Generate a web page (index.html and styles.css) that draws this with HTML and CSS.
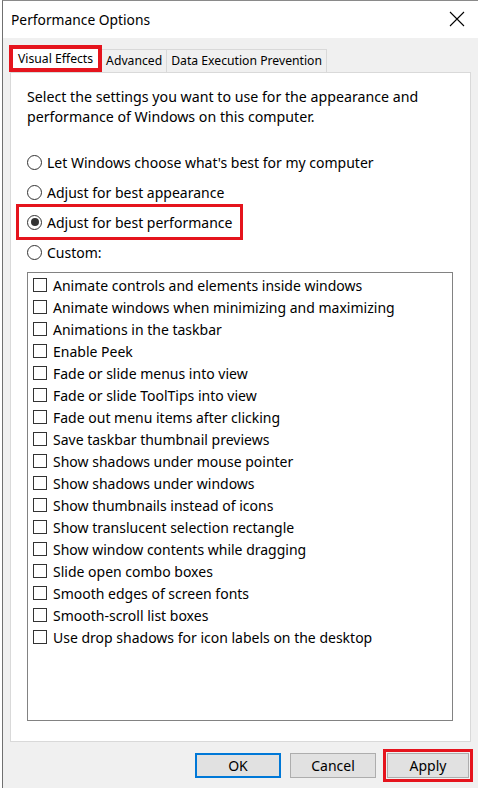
FILE: index.html
```html
<!DOCTYPE html>
<html>
<head>
<meta charset="utf-8">
<link rel="stylesheet" href="styles.css">
</head>
<body>
<div class="window">
  <div class="titlebar">
    <span class="title">Performance Options</span>
    <svg class="close" width="16" height="16" viewBox="0 0 16 16"><path d="M1 1L15 15M15 1L1 15" stroke="#000" stroke-width="1.1" fill="none"/></svg>
  </div>
  <div class="main">
    <div class="tabs">
      <div class="tab selected">Visual Effects</div>
      <div class="tab">Advanced</div>
      <div class="tab">Data Execution Prevention</div>
    </div>
    <div class="panel">
      <p class="desc">Select the settings you want to use for the appearance and performance of Windows on this computer.</p>
      <div class="radios">
        <div class="radio"><span class="circle"></span><span>Let Windows choose what's best for my computer</span></div>
        <div class="radio"><span class="circle"></span><span>Adjust for best appearance</span></div>
        <div class="radio highlight"><span class="circle checked"></span><span>Adjust for best performance</span></div>
        <div class="radio"><span class="circle"></span><span>Custom:</span></div>
      </div>
      <div class="listbox">
        <div class="item"><span class="box"></span><span>Animate controls and elements inside windows</span></div>
        <div class="item"><span class="box"></span><span>Animate windows when minimizing and maximizing</span></div>
        <div class="item"><span class="box"></span><span>Animations in the taskbar</span></div>
        <div class="item"><span class="box"></span><span>Enable Peek</span></div>
        <div class="item"><span class="box"></span><span>Fade or slide menus into view</span></div>
        <div class="item"><span class="box"></span><span>Fade or slide ToolTips into view</span></div>
        <div class="item"><span class="box"></span><span>Fade out menu items after clicking</span></div>
        <div class="item"><span class="box"></span><span>Save taskbar thumbnail previews</span></div>
        <div class="item"><span class="box"></span><span>Show shadows under mouse pointer</span></div>
        <div class="item"><span class="box"></span><span>Show shadows under windows</span></div>
        <div class="item"><span class="box"></span><span>Show thumbnails instead of icons</span></div>
        <div class="item"><span class="box"></span><span>Show translucent selection rectangle</span></div>
        <div class="item"><span class="box"></span><span>Show window contents while dragging</span></div>
        <div class="item"><span class="box"></span><span>Slide open combo boxes</span></div>
        <div class="item"><span class="box"></span><span>Smooth edges of screen fonts</span></div>
        <div class="item"><span class="box"></span><span>Smooth-scroll list boxes</span></div>
        <div class="item"><span class="box"></span><span>Use drop shadows for icon labels on the desktop</span></div>
      </div>
    </div>
    <div class="buttons">
      <button class="btn default">OK</button>
      <button class="btn">Cancel</button>
      <button class="btn apply">Apply</button>
    </div>
  </div>
</div>
</body>
</html>
```

FILE: styles.css
```css
* { box-sizing: border-box; }
html, body { margin: 0; padding: 0; }
body {
  background: #fff;
  font-family: "Noto Sans", "Open Sans", sans-serif;
  color: #000;
  width: 478px;
  height: 788px;
  overflow: hidden;
}
.window {
  margin-left: 2px;
  height: 788px;
  border-left: 1px solid #707070;
  border-top: 1px solid #8a8a8a;
  background: #f0f0f0;
  display: flex;
  flex-direction: column;
}
.titlebar {
  height: 37px;
  background: #fff;
  display: flex;
  align-items: center;
  justify-content: space-between;
  padding: 0 13px 0 8px;
}
.title {
  font-size: 13.8px;
}
.close { display: block; margin-bottom: 2px; }
.main {
  padding: 7px 7px 0 6px;
  flex: 1;
  display: flex;
  flex-direction: column;
}
.tabs {
  display: flex;
  align-items: flex-end;
  height: 27px;
  font-size: 12.2px;
  position: relative;
  z-index: 1;
}
.tab {
  height: 23px;
  line-height: 21px;
  padding: 0 4px;
  border: 1px solid #d9d9d9;
  border-bottom: none;
  border-left: none;
  background: #f0f0f0;
}
.tab.selected {
  height: 27px;
  line-height: 19px;
  background: #fff;
  border: 4px solid #e5141d;
  padding: 0 5px;
}
.panel {
  margin-left: 1px;
  background: #fff;
  border: 1px solid #d9d9d9;
  padding: 14px 14px 20px 16px;
  height: 670px;
}
.desc {
  margin: 0;
  font-size: 14.2px;
  line-height: 20px;
  padding-right: 10px;
}
.radios {
  margin-top: 20px;
  display: flex;
  flex-direction: column;
  align-items: flex-start;
}
.radio {
  height: 30px;
  display: flex;
  align-items: center;
  gap: 5px;
  font-size: 14px;
  padding: 0 8px;
  margin-left: -8px;
}
.radio.highlight {
  outline: 3px solid #e5141d;
  outline-offset: 0;
}
.circle {
  width: 15px;
  height: 15px;
  border: 1px solid #333;
  border-radius: 50%;
  background: #fff;
  display: flex;
  align-items: center;
  justify-content: center;
}
.circle.checked::after {
  content: "";
  width: 8px;
  height: 8px;
  border-radius: 50%;
  background: #333;
}
.listbox {
  margin-top: 5px;
  width: 426px;
  height: 449px;
  border: 1px solid #828282;
  padding: 1px 0 0 5px;
}
.item {
  height: 22px;
  display: flex;
  align-items: center;
  gap: 6px;
  font-size: 14px;
}
.box {
  width: 14px;
  height: 14px;
  border: 1px solid #333;
  background: #fff;
}
.buttons {
  margin-top: 11px;
  display: flex;
  justify-content: flex-end;
  gap: 9px;
  padding-right: 2px;
}
.btn {
  width: 86px;
  height: 25px;
  background: #e1e1e1;
  border: 1px solid #adadad;
  font-family: "Noto Sans", "Open Sans", sans-serif;
  font-size: 14px;
  color: #000;
  padding: 0;
}
.btn.default {
  border: 2px solid #0078d7;
}
.btn.apply {
  width: 82px;
  margin-left: 2px;
  outline: 3px solid #e5141d;
  outline-offset: 1px;
}
```
